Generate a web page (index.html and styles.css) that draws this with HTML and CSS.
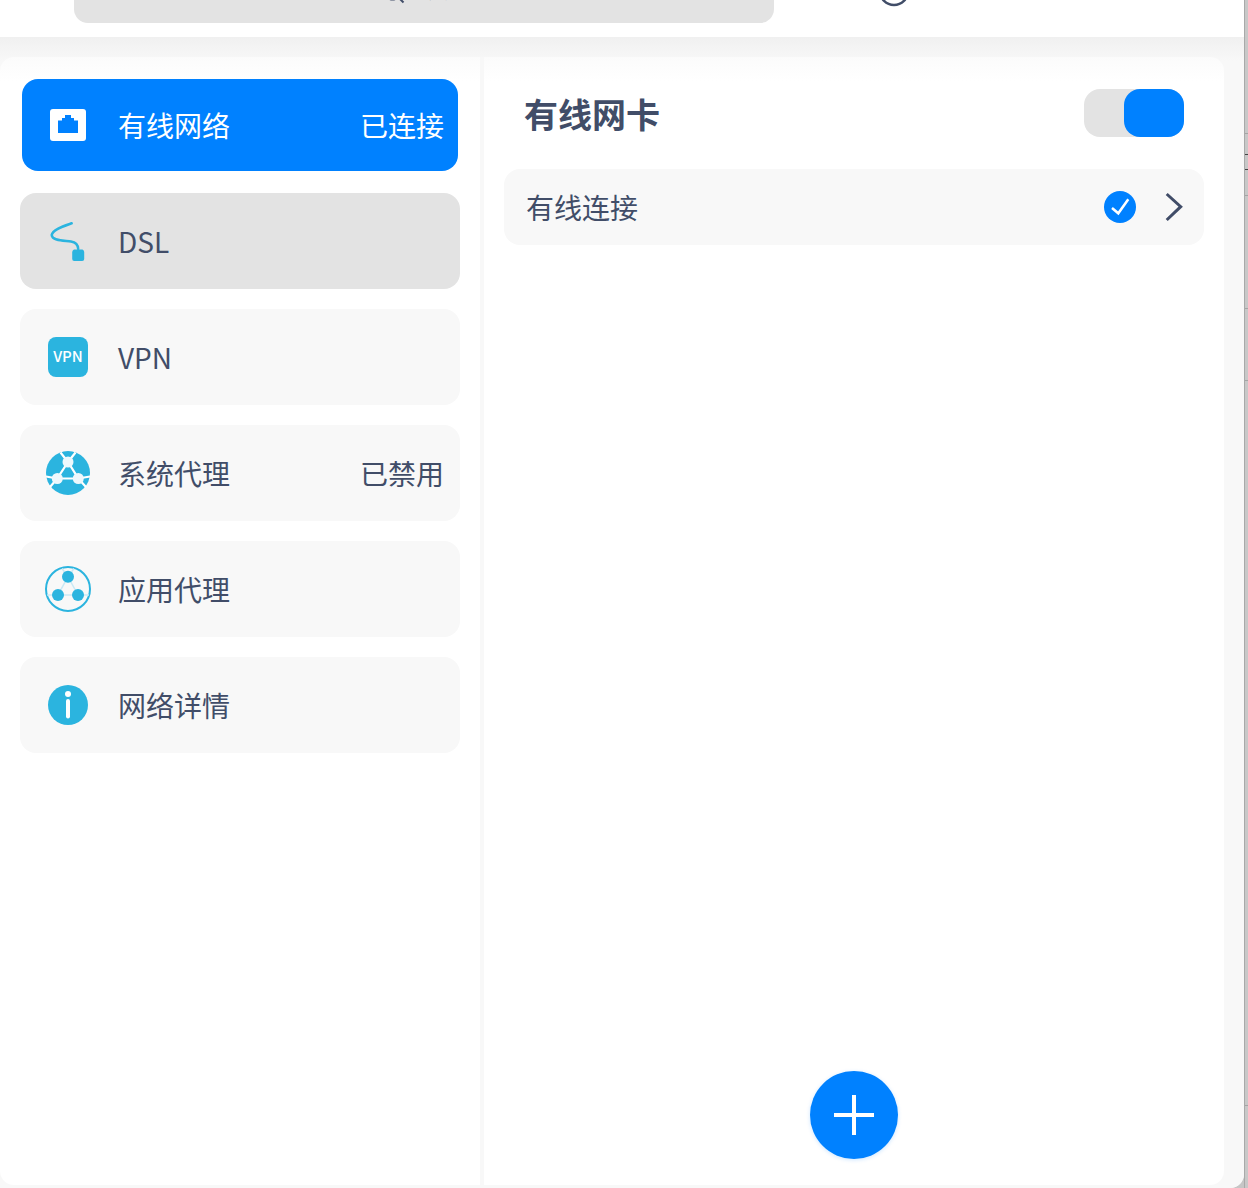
FILE: index.html
```html
<!DOCTYPE html>
<html lang="zh-CN">
<head>
<meta charset="utf-8">
<title>网络设置</title>
<link rel="stylesheet" href="styles.css">
</head>
<body>
<div class="root">
  <div class="app">
    <header class="topbar">
      <div class="search">
        <svg class="search-icon" width="24" height="24" viewBox="0 0 24 24"><circle cx="10.500" cy="10.500" r="8"/><path d="M16.500 16.500l5 5"/></svg>
        <span>搜索</span>
      </div>
      <svg class="top-circle" width="32" height="32" viewBox="0 0 32 32"><circle cx="16" cy="16" r="14"/></svg>
    </header>
    <main class="main">
      <div class="panel">
        <nav class="sidebar">
          <div class="item active">
            <span class="icon"><svg width="36" height="32" viewBox="0 0 36 32"><rect width="36" height="32" rx="3" fill="#fff"/><path d="M8 24V11.500h4V9h3V6h6v3h3v2.500h4V24z" fill="#0081ff"/></svg></span>
            <span class="label">有线网络</span><span class="state">已连接</span>
          </div>
          <div class="item hover">
            <span class="icon"><svg width="48" height="48" viewBox="0 0 48 48"><path class="cable" d="M27.700 6.300C20 9 8.500 12.500 7.700 18C8 24 20 23.500 27 24.500C31.500 25.200 34 27.500 34.200 32"/><path d="M30 32.500h8.500a3 3 0 0 1 1.700 2.500V42a2 2 0 0 1-2 2h-8a2 2 0 0 1-2-2v-7a3 3 0 0 1 1.800-2.500z" fill="#2bb4df"/></svg></span>
            <span class="label">DSL</span>
          </div>
          <div class="item">
            <span class="icon"><span class="vpn">VPN</span></span>
            <span class="label">VPN</span>
          </div>
          <div class="item">
            <span class="icon"><svg width="48" height="48" viewBox="0 0 48 48"><circle cx="24" cy="24" r="22" fill="#2bb4df"/><g stroke="#fff" stroke-width="2.200" fill="none"><path d="M24 13L13.300 29.500H34.300z"/><path d="M24 13L16.500 3.500M24 13l7.500-9.500M13.300 29.500L2 27.500M13.300 29.500L6 38M34.300 29.500L46 27.500M34.300 29.500L42 38"/></g><circle cx="24" cy="13" r="5.500" fill="#eef8fc"/><circle cx="13.300" cy="29.500" r="5.500" fill="#eef8fc"/><circle cx="34.300" cy="29.500" r="5.500" fill="#eef8fc"/></svg></span>
            <span class="label">系统代理</span><span class="state">已禁用</span>
          </div>
          <div class="item">
            <span class="icon"><svg width="48" height="48" viewBox="0 0 48 48"><circle cx="24" cy="24" r="22" fill="none" stroke="#2bb4df" stroke-width="2"/><path d="M24 11.700L14 30H34zM14 30H3M34 30H45M24 11.700L18 3.500M24 11.700L30 3.500" fill="none" stroke="#c9e9f5" stroke-width="1.500"/><circle cx="24" cy="11.700" r="6" fill="#2bb4df"/><circle cx="14" cy="30" r="6" fill="#2bb4df"/><circle cx="34" cy="30" r="6" fill="#2bb4df"/></svg></span>
            <span class="label">应用代理</span>
          </div>
          <div class="item">
            <span class="icon"><svg width="48" height="48" viewBox="0 0 48 48"><circle cx="24" cy="24" r="20" fill="#2bb4df"/><circle cx="24" cy="13" r="3" fill="#fff"/><rect x="22" y="18" width="4" height="19.500" rx="2" fill="#fff"/></svg></span>
            <span class="label">网络详情</span>
          </div>
        </nav>
        <section class="content">
          <div class="content-head">
            <h1 class="title">有线网卡</h1>
            <div class="toggle"><span class="knob"></span></div>
          </div>
          <div class="conn">
            <span class="conn-name">有线连接</span>
            <svg class="conn-check" width="32" height="32" viewBox="0 0 32 32"><circle cx="16" cy="16" r="16" fill="#0081ff"/><path d="M8 17l6.300 5.300L24.300 8.300" fill="none" stroke="#fff" stroke-width="2.500"/></svg>
            <svg class="conn-arrow" width="20" height="30" viewBox="0 0 20 30"><path d="M2.700 2L16.700 14.700L2.700 28" fill="none" stroke="#414d68" stroke-width="3"/></svg>
          </div>
          <button class="fab" type="button" aria-label="添加"><svg width="40" height="40" viewBox="0 0 40 40"><path d="M0 20H40M20 0V40" stroke="#fff" stroke-width="4"/></svg></button>
        </section>
      </div>
    </main>
  </div>
  <div class="strip"></div>
</div>
</body>
</html>
```
FILE: styles.css
```css
html, body {
  margin: 0;
  padding: 0;
  height: 100%;
  overflow: hidden;
}
body {
  font-family: "Noto Sans CJK SC", "Noto Sans", sans-serif;
  color: #414d68;
  background: #c6c6c6;
}
.root {
  display: flex;
  width: 1248px;
  height: 1188px;
  overflow: hidden;
}
.app {
  width: 1244px;
  display: flex;
  flex-direction: column;
  background: #f8f8f8;
  border-bottom-right-radius: 14px;
  overflow: hidden;
}
.strip {
  width: 4px;
  box-sizing: border-box;
  border-left: 1px solid #a9a9a9;
  background: linear-gradient(to bottom,
    #c8c8c8 0, #c8c8c8 133px, #a5a5a5 133px, #a5a5a5 134px,
    #c8c8c8 134px, #c8c8c8 154px, #444 154px, #444 155px,
    #c8c8c8 155px, #c8c8c8 169px, #444 169px, #444 170px,
    #c8c8c8 170px, #c8c8c8 195px, #a5a5a5 195px, #a5a5a5 196px,
    #c8c8c8 196px, #c8c8c8 308px, #a5a5a5 308px, #a5a5a5 309px,
    #c8c8c8 309px, #c8c8c8 380px, #a5a5a5 380px, #a5a5a5 381px,
    #c8c8c8 381px, #c8c8c8 1105px, #a5a5a5 1105px, #a5a5a5 1106px,
    #c8c8c8 1106px);
}
.topbar {
  flex: 0 0 37px;
  height: 37px;
  background: #fff;
  display: flex;
  align-items: flex-end;
  padding: 0 0 14px 74px;
  box-sizing: border-box;
  overflow: hidden;
}
.search {
  width: 700px;
  height: 74px;
  flex: none;
  box-sizing: border-box;
  padding-left: 11px;
  background: #e3e3e3;
  border-radius: 14px;
  display: flex;
  align-items: center;
  justify-content: center;
  gap: 14px;
  font-size: 28px;
}
.search-icon {
  margin-top: 13px;
  fill: none;
  stroke: #414d68;
  stroke-width: 2;
}
.top-circle {
  flex: none;
  margin: 0 0 16px 104px;
  fill: none;
  stroke: #414d68;
  stroke-width: 2.500;
}
.main {
  flex: 1;
  min-height: 0;
  display: flex;
  padding: 20px 20px 3px 0;
  background: linear-gradient(to bottom, #f0f0f0 0, #f8f8f8 24px);
}
.panel {
  flex: 1;
  display: flex;
  background: linear-gradient(to bottom, #fbfbfb 0, #fff 24px);
  border-radius: 14px;
  overflow: hidden;
}
.sidebar {
  width: 484px;
  box-sizing: border-box;
  border-right: 4px solid #f8f8f8;
  padding: 20px;
  display: flex;
  flex-direction: column;
  gap: 20px;
}
.item {
  height: 96px;
  box-sizing: border-box;
  display: flex;
  align-items: center;
  padding: 0 16px 0 24px;
  border-radius: 16px;
  background: #f8f8f8;
  font-size: 28px;
  line-height: 40px;
}
.item.hover {
  background: #e3e3e3;
}
.item.active {
  height: 92px;
  margin: 2px;
  padding: 0 14px 0 22px;
  background: #0081ff;
  color: #fff;
}
.icon {
  flex: none;
  width: 48px;
  height: 48px;
  margin-right: 26px;
  display: flex;
  align-items: center;
  justify-content: center;
}
.cable {
  fill: none;
  stroke: #2bb4df;
  stroke-width: 2.500;
  stroke-linecap: round;
}
.vpn {
  width: 40px;
  height: 40px;
  border-radius: 8px;
  background: #2bb4df;
  color: #fff;
  font-size: 15px;
  font-weight: 500;
  line-height: 38px;
  text-align: center;
}
.label {
  flex: 1;
}
.state {
  flex: none;
}
.content {
  flex: 1;
  display: flex;
  flex-direction: column;
  padding: 32px 20px 26px;
  min-width: 0;
}
.content-head {
  display: flex;
  align-items: center;
  justify-content: space-between;
  height: 48px;
  padding-left: 20px;
  margin-bottom: 32px;
}
.title {
  margin: 0;
  font-size: 34px;
  font-weight: 700;
  line-height: 48px;
  margin-top: 2px;
}
.toggle {
  width: 100px;
  height: 48px;
  margin-right: 20px;
  border-radius: 16px;
  background: #e3e3e3;
  display: flex;
  justify-content: flex-end;
}
.knob {
  width: 60px;
  height: 48px;
  border-radius: 16px;
  background: #0081ff;
}
.conn {
  height: 76px;
  border-radius: 16px;
  background: #f8f8f8;
  display: flex;
  align-items: center;
  padding: 0 20px 0 22px;
  font-size: 28px;
}
.conn-name {
  flex: 1;
}
.conn-check {
  flex: none;
  margin: 0 28px 0 0;
}
.conn-arrow {
  flex: none;
}
.fab {
  margin-top: auto;
  align-self: center;
  width: 88px;
  height: 88px;
  padding: 0;
  border: 0;
  border-radius: 50%;
  background: #0081ff;
  box-shadow: 0 1px 4px rgba(0, 129, 255, 0.2);
  display: flex;
  align-items: center;
  justify-content: center;
}
```
